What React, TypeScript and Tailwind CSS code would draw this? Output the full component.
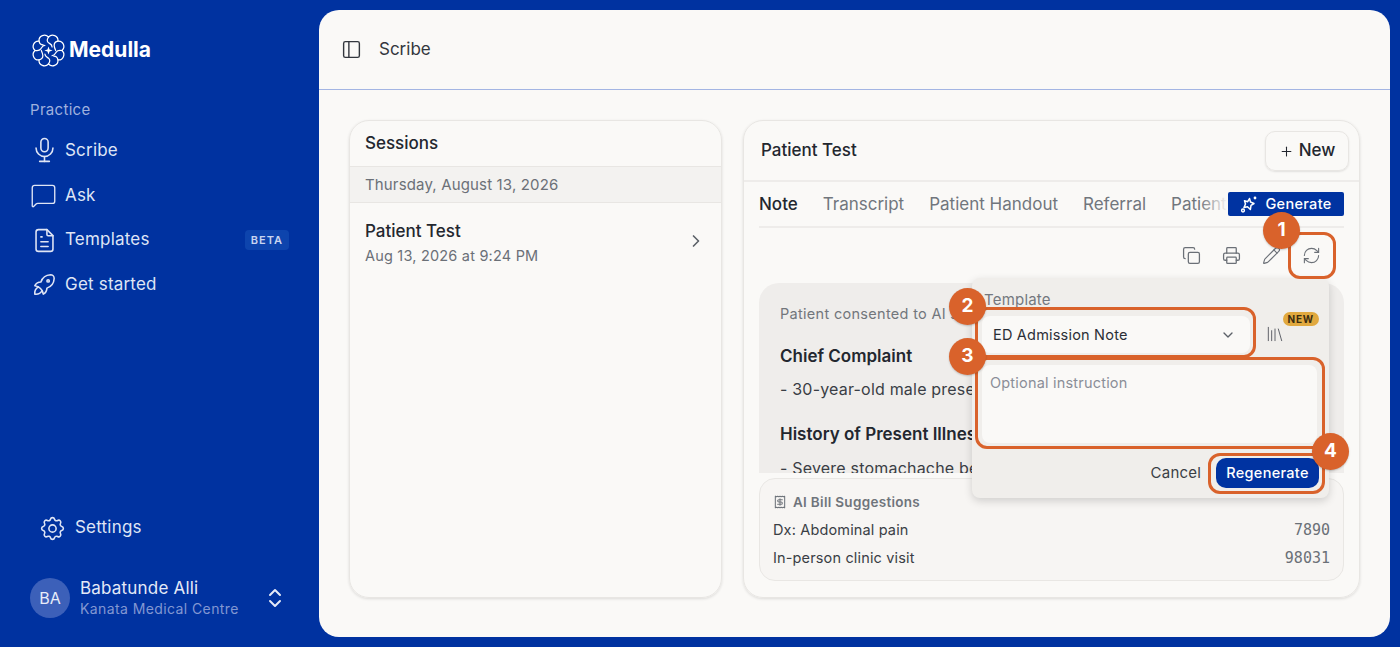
import {
  ChevronDown,
  ChevronRight,
  ChevronsUpDown,
  Copy,
  Library,
  MessageSquare,
  PanelLeft,
  Pencil,
  Plus,
  Printer,
  Receipt,
  RefreshCw,
} from "lucide-react";
import { TbFileText, TbMicrophone, TbRocket, TbSettings } from "react-icons/tb";

function Logo() {
  return (
    <svg width="37" height="37" viewBox="0 0 36 36" fill="none" stroke="white" strokeWidth="1.2" strokeLinecap="round">
      <path d="M18 5A5.200 5.200 0 0 1 27.200 8.800A5.200 5.200 0 0 1 31 18A5.200 5.200 0 0 1 27.200 27.200A5.200 5.200 0 0 1 18 31A5.200 5.200 0 0 1 8.800 27.200A5.200 5.200 0 0 1 5 18A5.200 5.200 0 0 1 8.800 8.800A5.200 5.200 0 0 1 18 5Z" />
      <path d="M18 5c-1.800 2.500-1.500 4.500 0 5.500s3.500 1.500 3.500 4M27.200 8.800c-2.500.5-3.700 2.200-3.700 4s.5 3 1.500 5.200" />
      <path d="M31 18c-2.800-.5-4.500 0-5.500 1.500s-1.500 3.500-4 3.500M27.200 27.200c-.5-2.500-2.200-3.700-4-3.700" />
      <path d="M18 31c1.800-2.500 1.500-4.500 0-5.500s-3.500-1.500-3.500-4M8.800 27.200c2.500-.5 3.700-2.200 3.700-4s-.5-3-1.500-5.200" />
      <path d="M5 18c2.800.5 4.500 0 5.500-1.500s1.500-3.500 4-3.500M8.800 8.800c.5 2.500 2.200 3.700 4 3.700" />
      <path d="M18 14l1 3 3 1-3 1-1 3-1-3-3-1 3-1Z" fill="white" stroke="none" />
    </svg>
  );
}

function SparkleIcon() {
  return (
    <svg width="18" height="18" viewBox="0 0 18 18" fill="none" stroke="white" strokeWidth="1.500" strokeLinejoin="round">
      <path d="M9.500 3.500l1 3.500 3.500 1.500-3 1.800-.6 4.200-2.900-2.700-3.500.7 1.500-3.500-1-3.300 3.200 1Z" />
      <circle cx="15" cy="3" r="1.400" fill="white" stroke="none" />
      <circle cx="3" cy="15.500" r="1.400" />
    </svg>
  );
}

function NavItem({ icon, label, badge }: { icon: React.ReactNode; label: string; badge?: string }) {
  return (
    <div className="flex h-[44.7px] items-center pl-[30px] pr-[30px] text-[17px] tracking-[0.2px] text-[#dfe5f5]">
      <div className="flex w-[35px] shrink-0 items-center">{icon}</div>
      <span>{label}</span>
      {badge ? (
        <span className="ml-auto rounded-[4px] bg-[#0d44ad] px-[6px] py-[2px] text-[11px] font-semibold tracking-[1px] text-[#c9d5f0]">
          {badge}
        </span>
      ) : null}
    </div>
  );
}

function Sidebar() {
  return (
    <aside className="flex w-[319px] shrink-0 flex-col">
      <div className="flex h-[80px] items-center gap-[2px] pl-[30px]">
        <Logo />
        <span className="text-[21px] font-bold text-white">Medulla</span>
      </div>
      <div className="mt-[9px] pl-[30px] text-[15px] tracking-[0.3px] text-[#9fb1de]">Practice</div>
      <div className="mt-[7px]">
        <NavItem icon={<TbMicrophone size={29} strokeWidth={1.3} />} label="Scribe" />
        <NavItem icon={<MessageSquare size={27} strokeWidth={1.2} />} label="Ask" />
        <NavItem icon={<TbFileText size={29} strokeWidth={1.3} />} label="Templates" badge="BETA" />
        <NavItem icon={<TbRocket size={29} strokeWidth={1.3} />} label="Get started" />
      </div>
      <div className="mt-auto flex h-[40px] items-center gap-[8px] pl-[38px] text-[17px] tracking-[0.2px] text-[#dfe5f5]">
        <TbSettings size={29} strokeWidth={1.3} />
        <span>Settings</span>
      </div>
      <div className="mb-[18px] mt-[29px] flex items-center pl-[30px] pr-[32px]">
        <div className="flex size-[40px] items-center justify-center rounded-full bg-[#3c60b9] text-[16px] text-[#e7ecf8]">
          BA
        </div>
        <div className="ml-[10px] flex flex-col">
          <span className="text-[17px] leading-[22px] tracking-[0.2px] text-[#e4e9f7]">Babatunde Alli</span>
          <span className="text-[14px] leading-[20px] tracking-[0.4px] text-[#8297d2]">Kanata Medical Centre</span>
        </div>
        <ChevronsUpDown size={24} strokeWidth={2} className="ml-auto text-[#e4e9f7]" />
      </div>
    </aside>
  );
}

function SessionsCard() {
  return (
    <section className="flex w-[373px] shrink-0 flex-col overflow-hidden rounded-[20px] border border-[#e8e6e3] shadow-[0_1px_3px_rgba(0,0,0,0.12)]">
      <div className="flex h-[45px] items-center px-[15px] pt-[1px] text-[17px] font-medium text-[#23272f]">Sessions</div>
      <div className="flex h-[37px] items-center border-y border-[#e8e6e3] bg-[#f3f2f0] px-[15px] pt-[1px] text-[15px] tracking-[0.15px] text-[#6b7077]">
        Thursday, August 13, 2026
      </div>
      <div className="flex items-center justify-between pl-[15px] pr-[15px] pt-[16px]">
        <div>
          <div className="text-[17px] font-medium leading-[24px] text-[#23272f]">Patient Test</div>
          <div className="text-[14.500px] leading-[26px] tracking-[0.2px] text-[#6b7077]">Aug 13, 2026 at 9:24 PM</div>
        </div>
        <ChevronRight size={20} strokeWidth={2} className="mb-[6px] text-[#5c6168]" />
      </div>
    </section>
  );
}

function Tabs() {
  return (
    <div className="relative flex h-[46px] items-center gap-[25px] overflow-hidden border-b-2 border-[#eeecea] pt-[1px] text-[17px] text-[#71767d]">
      <span className="font-medium text-[#23272f]">Note</span>
      <span>Transcript</span>
      <span>Patient Handout</span>
      <span>Referral</span>
      <span className="whitespace-nowrap">Patient Letter</span>
      <div className="absolute right-[116px] top-0 h-full w-[28px] bg-gradient-to-r from-transparent to-[#faf9f7]" />
      <div className="absolute right-0 top-[10px] flex h-[24px] w-[116px] items-center justify-center gap-[7px] rounded-[2px] bg-[#0033a1] text-[14.500px] font-medium tracking-[0.3px] text-white">
        <SparkleIcon />
        Generate
      </div>
    </div>
  );
}

function NotePanel() {
  return (
    <div className="h-[190px] overflow-hidden rounded-t-[20px] bg-[#efedeb] pl-[21px] pt-[21px] whitespace-nowrap">
      <div className="text-[14.500px] leading-[20px] tracking-[0.3px] text-[#72767c]">Patient consented to AI scribe.</div>
      <div className="mt-[20px] text-[17px] font-semibold leading-[24px] text-[#23272f]">Chief Complaint</div>
      <div className="mt-[9px] text-[16px] leading-[24px] tracking-[0.2px] text-[#3a3e45]">- 30-year-old male presenting with stomachache</div>
      <div className="mt-[21px] text-[17px] font-semibold leading-[24px] text-[#23272f]">History of Present Illness</div>
      <div className="mt-[10px] text-[16px] leading-[24px] tracking-[0.2px] text-[#3a3e45]">- Severe stomachache beginning this morning</div>
    </div>
  );
}

function BillCard() {
  return (
    <div className="mt-[5px] h-[103px] rounded-[16px] border border-[#e9e7e4] bg-[#f7f5f3] px-[13px] pt-[13px]">
      <div className="flex items-center gap-[6px] text-[13.500px] font-semibold tracking-[0.3px] text-[#6f747b]">
        <Receipt size={14} strokeWidth={1.8} />
        AI Bill Suggestions
      </div>
      <div className="mt-[4px] flex h-[28px] items-center justify-between text-[14.500px] tracking-[0.15px] text-[#3a3e45]">
        <span>Dx: Abdominal pain</span>
        <span className="font-['DejaVu_Sans_Mono',monospace] text-[15px] tracking-normal text-[#6b7077]">7890</span>
      </div>
      <div className="flex h-[28px] items-center justify-between text-[14.500px] tracking-[0.15px] text-[#3a3e45]">
        <span>In-person clinic visit</span>
        <span className="font-['DejaVu_Sans_Mono',monospace] text-[15px] tracking-normal text-[#6b7077]">98031</span>
      </div>
    </div>
  );
}

function Popover() {
  return (
    <div className="absolute left-[228px] top-[157px] flex h-[220px] w-[357px] flex-col rounded-[8px] bg-[#f0eeeb] pl-[10px] pr-[10px] pt-[13px] shadow-[0_3px_8px_rgba(0,0,0,0.16)]">
      <div className="pl-[2px] text-[15px] leading-[18px] tracking-[0.2px] text-[#74787e]">Template</div>
      <div className="mt-[7px] flex items-center">
        <div className="flex h-[37px] w-[268px] items-center justify-between rounded-[8px] bg-[#faf9f7] pl-[11px] pr-[14px] pt-[1px] text-[14.500px] tracking-[0.2px] text-[#2b2f36]">
          ED Admission Note
          <ChevronDown size={16} strokeWidth={2} className="text-[#5c6168]" />
        </div>
        <Library size={20} strokeWidth={1.1} className="ml-[15px] mt-[-1px] text-[#53575e]" />
      </div>
      <div className="absolute right-[10px] top-[34px] rounded-full bg-[#e1a93f] px-[5px] py-[1px] text-[10px] font-bold leading-[12px] tracking-[0.8px] text-[#3b2d10]">
        NEW
      </div>
      <div className="mt-[12px] h-[78px] w-[335px] rounded-[8px] bg-[#faf9f7] px-[8px] pt-[7px] text-[14.500px] tracking-[0.2px] text-[#8a8e97]">
        Optional instruction
      </div>
      <div className="mt-[15px] flex items-center justify-end gap-[15px]">
        <span className="text-[15px] tracking-[0.2px] text-[#3a3e45]">Cancel</span>
        <div className="flex h-[30px] w-[103px] items-center justify-center rounded-[10px] bg-[#0033a1] text-[14.500px] font-medium tracking-[0.3px] text-white">
          Regenerate
        </div>
      </div>
    </div>
  );
}

function PatientCard() {
  return (
    <section className="relative flex min-w-0 flex-1 flex-col rounded-[20px] border border-[#e8e6e3] shadow-[0_1px_3px_rgba(0,0,0,0.12)]">
      <div className="flex h-[61px] shrink-0 items-center justify-between border-b-2 border-[#eeecea] pl-[17px] pr-[10px] pt-[1px]">
        <span className="text-[17px] font-medium text-[#23272f]">Patient Test</span>
        <div className="flex h-[40px] w-[84px] items-center justify-center gap-[5px] rounded-[10px] border border-[#e8e6e3] text-[17px] font-medium text-[#23272f] shadow-[0_1px_2px_rgba(0,0,0,0.1)]">
          <Plus size={15} strokeWidth={1.7} />
          New
        </div>
      </div>
      <div className="flex min-h-0 flex-1 flex-col px-[15px]">
        <Tabs />
        <div className="flex h-[55px] items-center justify-end gap-[21px] pr-[23px] text-[#6b7077]">
          <Copy size={19} strokeWidth={1.6} />
          <Printer size={19} strokeWidth={1.6} />
          <Pencil size={19} strokeWidth={1.4} />
          <RefreshCw size={19} strokeWidth={1.4} />
        </div>
        <NotePanel />
        <BillCard />
      </div>
      <Popover />
    </section>
  );
}

function Marker({ n, className }: { n: number; className: string }) {
  return (
    <div
      className={`absolute flex size-[37px] items-center justify-center rounded-full bg-[#d9622b] text-[19px] font-bold text-white shadow-[0_1px_2px_rgba(0,0,0,0.2)] ${className}`}
    >
      {n}
    </div>
  );
}

export default function App() {
  return (
    <div className="flex h-[647px] w-[1400px] overflow-hidden bg-[#0032a0] py-[10px] pr-[10px] font-['Inter',sans-serif]">
      <Sidebar />
      <main className="relative flex min-w-0 flex-1 flex-col rounded-[20px] bg-[#faf9f7]">
        <header className="flex h-[80px] shrink-0 items-center gap-[17px] border-b border-[#a3b5e3] pl-[22px] text-[17px] text-[#33373e]">
          <PanelLeft size={21} strokeWidth={1.6} />
          Scribe
        </header>
        <div className="flex min-h-0 flex-1 gap-[21px] px-[30px] pb-[39px] pt-[30px]">
          <SessionsCard />
          <PatientCard />
        </div>

        {/* walkthrough annotations */}
        <div className="absolute left-[969px] top-[222px] h-[47px] w-[48px] rounded-[12px] border-[3px] border-[#d9622b]" />
        <div className="absolute left-[656px] top-[297px] h-[51px] w-[281px] rounded-[12px] border-[3px] border-[#d9622b]" />
        <div className="absolute left-[656px] top-[347px] h-[92px] w-[350px] rounded-[12px] border-[3px] border-[#d9622b]" />
        <div className="absolute left-[889px] top-[443px] h-[41px] w-[117px] rounded-[12px] border-[3px] border-[#d9622b]" />
        <Marker n={1} className="left-[944px] top-[202px]" />
        <Marker n={2} className="left-[630px] top-[278px]" />
        <Marker n={3} className="left-[630px] top-[328px]" />
        <Marker n={4} className="left-[993px] top-[423px]" />
      </main>
    </div>
  );
}
